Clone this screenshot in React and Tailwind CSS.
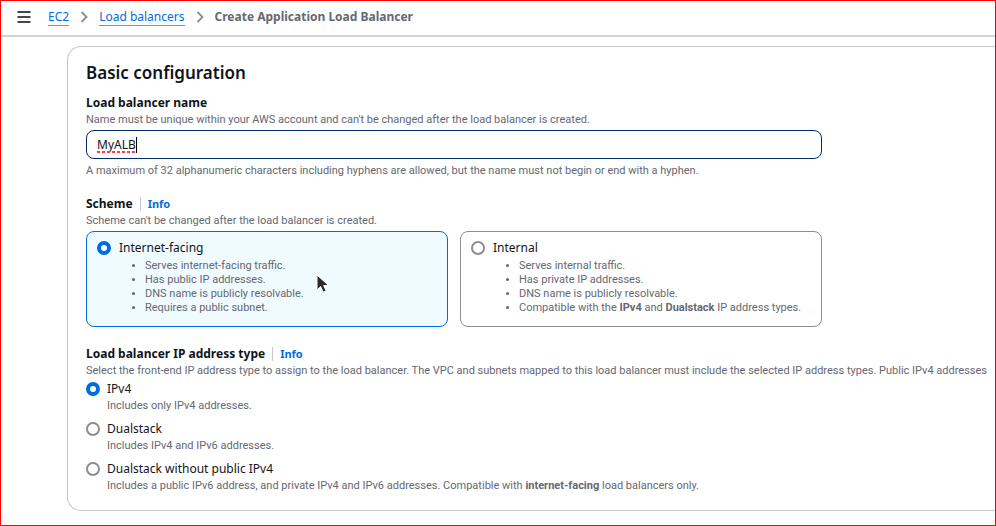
import React, { useState } from "react";

function Chevron() {
  return (
    <svg className="h-3 w-2 shrink-0" viewBox="0 0 8 12" fill="none" stroke="#8c8c94" strokeWidth="1.8" aria-hidden="true">
      <path d="M1.5 1 6.5 6 1.5 11" />
    </svg>
  );
}

function Radio({ className = "", ...props }) {
  return (
    <input
      type="radio"
      className={`m-0 h-[14px] w-[14px] shrink-0 appearance-none rounded-full border-2 border-[#8c8c94] bg-white checked:border-4 checked:border-[#006ce0] ${className}`}
      {...props}
    />
  );
}

function InfoLink() {
  return (
    <a href="#info" className="ml-[7px] border-l border-[#c6c6cd] pl-[7px] text-[11px] leading-[14px] font-bold text-[#006ce0]">
      Info
    </a>
  );
}

function Hint({ children }) {
  return <p className="font-['Roboto',sans-serif] text-[11px] leading-[18px] text-[#656871]">{children}</p>;
}

const schemes = [
  {
    id: "internet-facing",
    title: "Internet-facing",
    points: ["Serves internet-facing traffic.", "Has public IP addresses.", "DNS name is publicly resolvable.", "Requires a public subnet."],
  },
  {
    id: "internal",
    title: "Internal",
    points: [
      "Serves internal traffic.",
      "Has private IP addresses.",
      "DNS name is publicly resolvable.",
      <>Compatible with the <b>IPv4</b> and <b>Dualstack</b> IP address types.</>,
    ],
  },
];

const addressTypes = [
  { id: "ipv4", title: "IPv4", text: "Includes only IPv4 addresses." },
  { id: "dualstack", title: "Dualstack", text: "Includes IPv4 and IPv6 addresses." },
  {
    id: "dualstack-private",
    title: "Dualstack without public IPv4",
    text: <>Includes a public IPv6 address, and private IPv4 and IPv6 addresses. Compatible with <b>internet-facing</b> load balancers only.</>,
  },
];

export default function App() {
  const [name, setName] = useState("MyALB");
  const [scheme, setScheme] = useState("internet-facing");
  const [addressType, setAddressType] = useState("ipv4");

  return (
    <div className="relative min-h-screen overflow-hidden border border-[#ff0000] bg-white font-['Noto_Sans',sans-serif] text-[#0f141a]">
      <header className="flex h-9 items-center border-b-2 border-[#d4d4d8] pb-[2px] pl-[15px] text-[12px] leading-4">
        <button type="button" aria-label="Open navigation" className="flex h-4 w-4 items-center justify-center">
          <svg className="h-3 w-[14px]" viewBox="0 0 14 12" stroke="#424650" strokeWidth="2" aria-hidden="true">
            <path d="M0.5 1h13M0.5 6h13M0.5 11h13" />
          </svg>
        </button>
        <nav aria-label="Breadcrumb" className="ml-4 flex items-center gap-[11px]">
          <a href="#ec2" className="border-b border-[#559bea] text-[#006ce0]">EC2</a>
          <Chevron />
          <a href="#balancers" className="border-b border-[#559bea] text-[#006ce0]">Load balancers</a>
          <Chevron />
          <span className="font-bold text-[#656871]">Create Application Load Balancer</span>
        </nav>
      </header>

      <main className="mt-[9px] mb-[14px] ml-[66px] overflow-hidden rounded-l-[14px] border border-r-0 border-[#c6c6cd] px-[18px] pt-[14px] pb-[15px]">
        <h1 className="text-[17px] leading-6 font-semibold">Basic configuration</h1>

        <section className="mt-[10px] w-[736px]">
          <label htmlFor="lb-name" className="block text-[12px] leading-4 font-bold">Load balancer name</label>
          <Hint>Name must be unique within your AWS account and can't be changed after the load balancer is created.</Hint>
          <div className="relative mt-px">
            <input
              id="lb-name"
              value={name}
              onChange={(e) => setName(e.target.value)}
              className="block h-[29px] w-full rounded-lg border border-[#002b66] bg-white px-[10px] text-[12px] leading-4 outline-none"
            />
            <div className="pointer-events-none absolute top-[7px] left-[11px] h-4 border-r border-black text-[12px] leading-4" aria-hidden="true">
              <span className="invisible">{name}</span>
              <span className="absolute inset-x-0 bottom-0 h-[2px] bg-[repeating-linear-gradient(90deg,#ff4040_0_3px,transparent_3px_5px)]" />
            </div>
          </div>
          <div className="mt-[3px]">
            <Hint>A maximum of 32 alphanumeric characters including hyphens are allowed, but the name must not begin or end with a hyphen.</Hint>
          </div>
        </section>

        <fieldset className="mt-4 w-[736px]">
          <legend className="flex items-center text-[12px] leading-4 font-bold">Scheme<InfoLink /></legend>
          <Hint>Scheme can't be changed after the load balancer is created.</Hint>
          <div className="mt-px grid grid-cols-2 gap-3">
            {schemes.map((s) => (
              <label
                key={s.id}
                className={`flex h-24 rounded-lg border px-[10px] pt-2 ${scheme === s.id ? "border-[#006ce0] bg-[#f0fbff]" : "border-[#8c8c94] bg-white"}`}
              >
                <Radio name="scheme" checked={scheme === s.id} onChange={() => setScheme(s.id)} className="mt-px" />
                <div className="ml-2">
                  <div className="text-[12px] leading-4">{s.title}</div>
                  <ul className="mt-[3px] list-disc pl-[26px] font-['Roboto',sans-serif] text-[11px] leading-[14px] text-[#656871] marker:text-[10px]">
                    {s.points.map((p, i) => <li key={i}>{p}</li>)}
                  </ul>
                </div>
              </label>
            ))}
          </div>
        </fieldset>

        <fieldset className="mt-[19px]">
          <legend className="flex items-center text-[12px] leading-4 font-bold">Load balancer IP address type<InfoLink /></legend>
          <div className="whitespace-nowrap">
            <Hint>Select the front-end IP address type to assign to the load balancer. The VPC and subnets mapped to this load balancer must include the selected IP address types. Public IPv4 addresses</Hint>
          </div>
          <div className="mt-px flex flex-col gap-[6px]">
            {addressTypes.map((t) => (
              <label key={t.id} className="flex">
                <Radio name="address-type" checked={addressType === t.id} onChange={() => setAddressType(t.id)} className="mt-px" />
                <div className="ml-[7px]">
                  <div className="text-[12px] leading-4">{t.title}</div>
                  <Hint>{t.text}</Hint>
                </div>
              </label>
            ))}
          </div>
        </fieldset>
      </main>

      <svg className="pointer-events-none absolute top-[273px] left-[315px] h-5 w-[14px]" viewBox="0 0 14 20" aria-hidden="true">
        <path d="M1 1v15l3.7-3.4 2.4 5.6 3-1.3-2.4-5.4h5z" fill="#2b2b2b" stroke="#fff" strokeWidth="1" />
      </svg>
    </div>
  );
}
